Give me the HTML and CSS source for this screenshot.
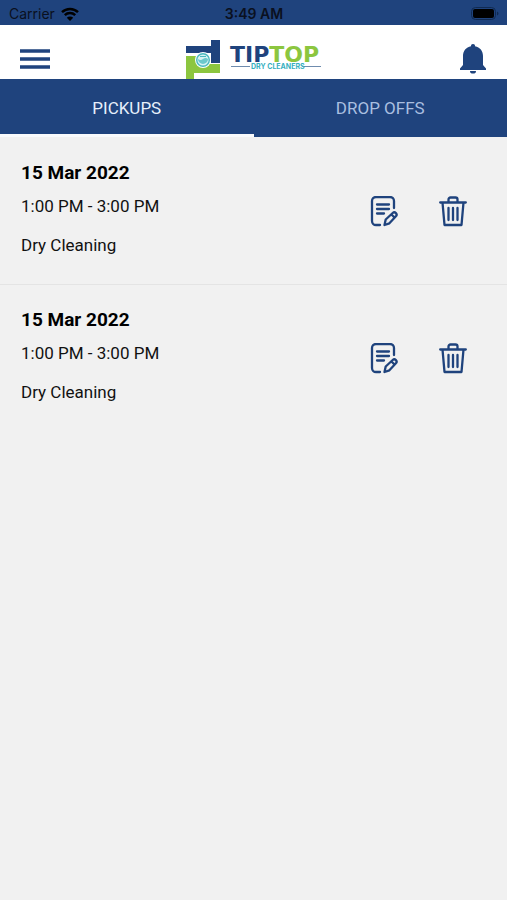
FILE: index.html
```html
<!DOCTYPE html>
<html lang="en">
<head>
  <meta charset="UTF-8" />
  <meta name="viewport" content="width=device-width, initial-scale=1" />
  <title>Tip Top Dry Cleaners</title>
  <link rel="stylesheet" href="styles.css">
</head>
<body>
  <!-- Phone status bar -->
  <div class="status-bar">
    <div class="carrier">
      <span>Carrier</span>
      <svg width="18" height="14" viewBox="0 0 18 14">
        <path d="M1 5.2a11.5 11.5 0 0 1 16 0M3.8 8.2a7.5 7.5 0 0 1 10.4 0" fill="none" stroke="#000" stroke-width="2.5" />
        <path d="M9 14L5.8 10.7a4.6 4.6 0 0 1 6.4 0z" />
      </svg>
    </div>
    <div class="time">3:49 AM</div>
    <div class="battery">
      <svg width="28" height="13" viewBox="0 0 28 13">
        <rect x="0.5" y="0.5" width="24" height="12" rx="4" fill="none" stroke="#102a52" />
        <rect x="2" y="2" width="21" height="9" rx="2" />
        <path d="M26 4.5c2 .8 2 3.2 0 4z" fill="#102a52" />
      </svg>
    </div>
  </div>

  <!-- Header -->
  <header class="header">
    <button class="icon-btn" aria-label="Menu">
      <svg width="30" height="20" viewBox="0 0 30 20">
        <path d="M0 2h30M0 10h30M0 18h30" stroke="#1f437d" stroke-width="3.6" />
      </svg>
    </button>
    <svg class="logo" width="136" height="39" viewBox="0 0 136 39">
      <path d="M1 6h25V0h9v23h-9V13H1z" fill="#1f437d" />
      <path d="M1 16h12v8h22v9H9v6H1z" fill="#8cc63f" />
      <circle cx="18" cy="20" r="8" fill="#fff" />
      <circle cx="18" cy="20" r="6.3" fill="#d9f3f3" stroke="#49b9bf" stroke-width="1.4" />
      <path d="M13 19q2.5 2 5 0t5 0a5 5 0 0 1-10 0z" fill="#6cc9cc" />
      <path d="M15 16.5h6" stroke="#49b9bf" />
      <text class="logo-name" x="45" y="22"><tspan fill="#1f437d">TIP</tspan><tspan fill="#8cc63f">TOP</tspan></text>
      <path d="M46 26.5h19M117 26.5h19" stroke="#6f8cae" />
      <text class="logo-sub" x="66" y="29">DRY CLEANERS</text>
    </svg>
    <button class="icon-btn" aria-label="Notifications">
      <svg width="26" height="30" viewBox="0 0 26 30" fill="#1f437d">
        <path d="M13 0a2 2 0 0 1 2 2.3c5 1 8 4.7 8 9.7v9l3 3.5V26H0v-1.5L3 21v-9c0-5 3-8.7 8-9.7A2 2 0 0 1 13 0z" />
        <path d="M10 27h6a3 2.6 0 0 1-6 0z" />
      </svg>
    </button>
  </header>

  <!-- Tabs -->
  <nav class="tabs">
    <button class="tab active">PICKUPS</button>
    <button class="tab">DROP OFFS</button>
  </nav>

  <!-- Icons shared by all rows -->
  <svg class="icon-defs">
    <symbol id="edit" viewBox="0 0 28 31">
      <g fill="none" stroke="#1f437d" stroke-width="2.3" stroke-linecap="round" stroke-linejoin="round">
        <path d="M10 29H6a4 4 0 0 1-4-4V5a4 4 0 0 1 4-4h14a4 4 0 0 1 4 4v7" />
        <path d="M7 8.5h12M7 13h12M7 17.5h7" />
        <path d="M14.5 29l1.2-5.5 7-6.5a2.3 2.3 0 0 1 3.2 3.3l-6.5 7zM21.5 18.5l3 3" />
      </g>
    </symbol>
    <symbol id="trash" viewBox="0 0 28 31">
      <g fill="none" stroke="#1f437d" stroke-width="2.3" stroke-linecap="round" stroke-linejoin="round">
        <path d="M1.2 6.5h25.6M3.5 6.5l2 22.5h17l2-22.5M9.500 6V3.5A2 2 0 0 1 11.5 1.5h5a2 2 0 0 1 2 2V6" />
        <path d="M9.5 12v12M14 12v12M18.5 12v12" />
      </g>
    </symbol>
  </svg>

  <!-- Pickup list -->
  <main class="pickups">
    <div class="pickup">
      <div class="details">
        <h2 class="date">15 Mar 2022</h2>
        <p class="slot">1:00 PM - 3:00 PM</p>
        <p class="service">Dry Cleaning</p>
      </div>
      <div class="actions">
        <button class="icon-btn" aria-label="Edit pickup"><svg width="28" height="31"><use href="#edit" /></svg></button>
        <button class="icon-btn" aria-label="Delete pickup"><svg width="28" height="31"><use href="#trash" /></svg></button>
      </div>
    </div>
    <div class="pickup">
      <div class="details">
        <h2 class="date">15 Mar 2022</h2>
        <p class="slot">1:00 PM - 3:00 PM</p>
        <p class="service">Dry Cleaning</p>
      </div>
      <div class="actions">
        <button class="icon-btn" aria-label="Edit pickup"><svg width="28" height="31"><use href="#edit" /></svg></button>
        <button class="icon-btn" aria-label="Delete pickup"><svg width="28" height="31"><use href="#trash" /></svg></button>
      </div>
    </div>
  </main>
</body>
</html>
```

FILE: styles.css
```css
body {
  margin: 0;
  min-height: 100vh;
  font-family: Roboto, sans-serif;
  background: #f1f1f1;
  color: #111;
}
svg {
  display: block;
}
button {
  font-family: inherit;
  border: none;
  background: none;
  padding: 0;
  cursor: pointer;
}
/* Status bar */
.status-bar {
  display: grid;
  grid-template-columns: 1fr auto 1fr;
  align-items: center;
  height: 25px;
  padding: 2px 8px 0 9px;
  box-sizing: border-box;
  background: #1f437d;
  color: #0a1020;
  font-family: Inter, sans-serif;
  font-size: 14px;
}
.carrier {
  display: flex;
  align-items: center;
  gap: 6px;
}
.time {
  font-weight: 600;
}
.battery {
  justify-self: end;
}
/* Header */
.header {
  display: grid;
  grid-template-columns: 1fr auto 1fr;
  align-items: center;
  height: 54px;
  padding: 14px 21px 0 20px;
  box-sizing: border-box;
  background: #fff;
}
.header .icon-btn:last-child {
  justify-self: end;
}
.header .icon-btn:first-child {
  justify-self: start;
}
.logo-name {
  font-family: "DejaVu Sans", sans-serif;
  font-weight: bold;
  font-size: 22px;
}
.logo-sub {
  font-family: Inter, sans-serif;
  font-weight: 700;
  font-size: 7px;
  fill: #35b0c0;
}
/* Tabs */
.tabs {
  display: flex;
  background: #1f437d;
}
.tab {
  flex: 1;
  height: 58px;
  padding-top: 2px;
  border-bottom: 3px solid transparent;
  font-size: 17px;
  color: #a9bfe0;
}
.tab.active {
  color: #e6effb;
  border-color: #f8fafc;
}
/* Pickup rows */
.icon-defs {
  display: none;
}
.pickups {
  padding-top: 1px;
}
.pickup {
  display: flex;
  justify-content: space-between;
  padding: 23px 40px 27px 21px;
  border-bottom: 1px solid #e4e4e4;
}
.pickup:last-child {
  border-bottom: none;
}
.date {
  margin: 0 0 9px;
  font-size: 19px;
  font-weight: 700;
  line-height: 24px;
  color: #000;
}
.slot,
.service {
  margin: 0;
  font-size: 17px;
  line-height: 24px;
}
.slot {
  margin-bottom: 15px;
}
.actions {
  display: flex;
  align-items: center;
  gap: 41px;
  padding-top: 4px;
}
```
